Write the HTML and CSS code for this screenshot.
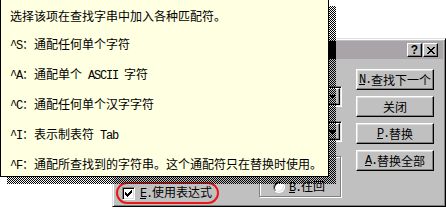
FILE: index.html
```html
<!DOCTYPE html>
<html lang="zh-CN">
<head>
<meta charset="utf-8">
<title>替换</title>
<link rel="stylesheet" href="styles.css">
</head>
<body>
<div class="dialog">
  <div class="titlebar">
    <div class="caption-btns">
      <span class="cap-btn cap-help">?</span>
      <span class="cap-btn"><svg class="glyph" width="8" height="7" viewBox="0 0 8 7"><path d="M0 0h2v1h-2zM6 0h2v1h-2zM1 1h2v1h-2zM5 1h2v1h-2zM2 2h4v1h-4zM3 3h2v1h-2zM2 4h4v1h-4zM1 5h2v1h-2zM5 5h2v1h-2zM0 6h2v1h-2zM6 6h2v1h-2z" fill="#000"/></svg></span>
    </div>
  </div>
  <div class="body">
    <div class="left">
      <div class="field-row">
        <div class="combo"><span class="combo-btn"><svg class="glyph" width="7" height="4" viewBox="0 0 7 4"><path d="M0 0h7v1h-7zM1 1h5v1h-5zM2 2h3v1h-3zM3 3h1v1h-1z" fill="#000"/></svg></span></div>
      </div>
      <div class="field-row second">
        <div class="combo"><span class="combo-btn"><svg class="glyph" width="7" height="4" viewBox="0 0 7 4"><path d="M0 0h7v1h-7zM1 1h5v1h-5zM2 2h3v1h-3zM3 3h1v1h-1z" fill="#000"/></svg></span></div>
      </div>
      <div class="bottom">
        <div class="options">
          <label class="check-row">
            <span class="checkbox"><svg class="glyph" width="7" height="7" viewBox="0 0 7 7"><path d="M6 0h1v1h-1zM5 1h2v1h-2zM0 2h1v1h-1zM4 2h3v1h-3zM0 3h2v1h-2zM3 3h3v1h-3zM0 4h5v1h-5zM1 5h3v1h-3zM2 6h1v1h-1z" fill="#000"/></svg></span>
            <span class="lbl"><span class="m"><u>E</u>.</span>使用表达式</span>
          </label>
        </div>
        <div class="group">
          <div class="radio-row"><span class="radio"></span><span class="lbl"><span class="m"><u>B</u>.</span>往回</span></div>
        </div>
      </div>
    </div>
    <div class="buttons">
      <button class="btn"><span class="m"><u>N</u>.</span>查找下一个</button>
      <button class="btn">关闭</button>
      <button class="btn"><span class="m"><u>P</u>.</span>替换</button>
      <button class="btn"><span class="m"><u>A</u>.</span>替换全部</button>
    </div>
  </div>
</div>
<div class="tip-shadow"></div>
<div class="tooltip">
  <p>选择该项在查找字串中加入各种匹配符。</p>
  <p><span class="m">^S</span>：通配任何单个字符</p>
  <p><span class="m">^A</span>：通配单个<span class="m"> ASCII </span>字符</p>
  <p><span class="m">^C</span>：通配任何单个汉字字符</p>
  <p><span class="m">^I</span>：表示制表符<span class="m"> Tab</span></p>
  <p><span class="m">^F</span>：通配所查找到的字符串。这个通配符只在替换时使用。</p>
</div>
</body>
</html>
```
FILE: styles.css
```css
* { box-sizing: border-box; }
html, body { margin: 0; padding: 0; background: #fff; }
body {
  width: 446px;
  height: 210px;
  overflow: hidden;
  position: relative;
  font-family: "Noto Sans CJK SC", sans-serif;
  font-size: 12px;
  color: #000;
}
.m {
  font-family: "Liberation Mono", "Noto Sans CJK SC", monospace;
  letter-spacing: -1.2px;
}
u { text-underline-offset: 1px; }
.glyph { display: block; shape-rendering: crispEdges; }

/* dialog */
.dialog {
  margin: 38px 0 0 112px;
  width: 334px;
  height: 169px;
  background: #c0c0c0;
  border: 1px solid;
  border-color: #dfdfdf #000 #000 #dfdfdf;
  box-shadow: inset 1px 1px #fff, inset -1px -1px #808080;
  padding: 2px;
  display: flex;
  flex-direction: column;
}
.titlebar {
  height: 18px;
  flex: none;
  background: #a8a4a8;
  display: flex;
  align-items: center;
  justify-content: flex-end;
  padding: 0 5px 0 3px;
}
.caption-btns { display: flex; gap: 1px; }
.cap-btn {
  width: 15px;
  height: 14px;
  background: #c0c0c0;
  border: 1px solid;
  border-color: #fff #000 #000 #fff;
  box-shadow: inset -1px -1px #808080;
  display: flex;
  align-items: center;
  justify-content: center;
}
.cap-help {
  font-family: "Liberation Sans", sans-serif;
  font-weight: bold;
  font-size: 12px;
  line-height: 1;
}
.body {
  flex: 1;
  display: flex;
  gap: 14px;
  padding: 10px 9px 0 1px;
}
.left {
  flex: 1;
  display: flex;
  flex-direction: column;
  padding-top: 17px;
}
.field-row { display: flex; align-items: center; height: 21px; padding-left: 80px; }
.field-row.second { margin-top: 14px; }
.combo {
  flex: 1;
  height: 21px;
  background: #fff;
  border: 1px solid;
  border-color: #808080 #fff #fff #808080;
  box-shadow: inset 1px 1px #000, inset -1px -1px #dfdfdf;
  padding: 1px;
  display: flex;
  justify-content: flex-end;
}
.combo-btn {
  width: 16px;
  background: #c0c0c0;
  border: 1px solid;
  border-color: #fff #000 #000 #fff;
  box-shadow: inset -1px -1px #808080, inset 1px 1px #dfdfdf;
  display: flex;
  align-items: center;
  justify-content: center;
}
.bottom {
  margin-top: 14px;
  height: 48px;
  display: flex;
  justify-content: space-between;
}
.options { display: flex; flex-direction: column; justify-content: flex-end; }
.check-row {
  height: 22px;
  border: 2px solid #e81818;
  border-radius: 11px;
  display: flex;
  align-items: center;
  gap: 5px;
  padding: 0 5px 0 4px;
}
.checkbox {
  width: 13px;
  height: 13px;
  background: #fff;
  border: 1px solid;
  border-color: #808080 #fff #fff #808080;
  box-shadow: inset 1px 1px #000, inset -1px -1px #dfdfdf;
  padding: 2px 0 0 2px;
}
.lbl { white-space: nowrap; line-height: 14px; }
.group {
  width: 82px;
  height: 41px;
  margin-right: 1px;
  border: 1px solid #808080;
  box-shadow: inset 1px 1px #fff, 1px 1px #fff;
  display: flex;
  flex-direction: column;
  justify-content: flex-end;
  padding: 0 0 3px 13px;
}
.radio-row { display: flex; align-items: center; gap: 4px; height: 12px; }
.radio {
  width: 12px;
  height: 12px;
  border-radius: 50%;
  background: #fff;
  border: 1px solid;
  border-color: #808080 #fff #fff #808080;
  box-shadow: inset 1px 1px #000, inset -1px -1px #dfdfdf;
}
.buttons {
  width: 78px;
  display: flex;
  flex-direction: column;
  gap: 6px;
}
.btn {
  height: 21px;
  width: 78px;
  margin: 0;
  padding: 0;
  font-family: "Noto Sans CJK SC", sans-serif;
  font-size: 12px;
  color: #000;
  background: #c0c0c0;
  border: 1px solid;
  border-color: #fff #000 #000 #fff;
  box-shadow: inset -1px -1px #808080, inset 1px 1px #dfdfdf;
  display: flex;
  align-items: center;
  justify-content: center;
  white-space: nowrap;
  line-height: 14px;
}

/* tooltip */
.tip-shadow {
  position: absolute;
  left: 7px;
  top: 6px;
  width: 329px;
  height: 178px;
  z-index: 2;
  background:
    linear-gradient(#000, #000) 0 35px / 100% 18px no-repeat,
    repeating-conic-gradient(#000 0 25%, transparent 0 50%) 0 0 / 2px 2px;
}
.tooltip {
  position: absolute;
  left: 0;
  top: -1px;
  width: 329px;
  height: 178px;
  z-index: 3;
  background: #ffffe1;
  border: 1px solid #000;
  padding: 2px 0 0 9px;
}
.tooltip p {
  margin: 0;
  line-height: 28px;
  white-space: nowrap;
}
```
